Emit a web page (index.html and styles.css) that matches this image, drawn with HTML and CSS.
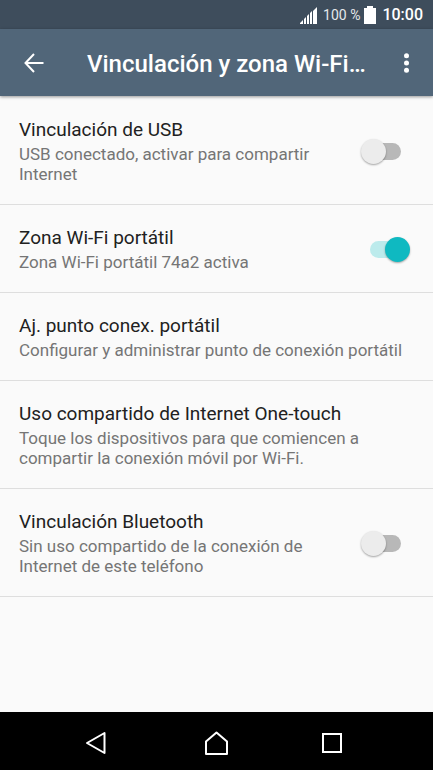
FILE: index.html
```
<!DOCTYPE html>
<html lang="es">
<head>
  <meta charset="UTF-8">
  <meta name="viewport" content="width=device-width, initial-scale=1.0">
  <title>Vinculación y zona Wi-Fi</title>
  <link rel="stylesheet" href="styles.css">
</head>
<body>
  <!-- Barra de estado -->
  <div class="status-bar">
    <svg class="signal" width="17" height="17" viewBox="0 0 17 17" aria-hidden="true">
      <path d="M0 17v-1l3-3v4zM4 17v-5l2-2v7zM7 17V9l2-2v10zM10 17V6l2-2v13zM13 17V4l4-4v17z" fill="#fff"/>
    </svg>
    <span class="battery-text">100 %</span>
    <svg class="battery" width="12" height="18" viewBox="0 0 12 18" aria-hidden="true">
      <path d="M3 0h6v2h3v16H0V2h3z" fill="#fff"/>
    </svg>
    <span class="clock">10:00</span>
  </div>

  <header class="app-bar">
    <button type="button" class="icon-btn back" aria-label="Atrás">
      <svg width="20" height="20" viewBox="0 0 20 20">
        <path d="M10 1L1.500 10L10 19M2 10H19.500" fill="none" stroke="#fff" stroke-width="2"/>
      </svg>
    </button>
    <h1>Vinculación y zona Wi-Fi…</h1>
    <button type="button" class="icon-btn more" aria-label="Más opciones">
      <svg width="6" height="20" viewBox="0 0 6 20" fill="#fff">
        <circle cx="2.500" cy="2.700" r="2.500"/>
        <circle cx="2.500" cy="10" r="2.500"/>
        <circle cx="2.500" cy="17.300" r="2.500"/>
      </svg>
    </button>
  </header>

  <!-- Lista de ajustes -->
  <main class="settings">
    <label class="row" for="usb">
      <span class="row-text">
        <span class="row-title">Vinculación de USB</span>
        <span class="row-summary">USB conectado, activar para compartir Internet</span>
      </span>
      <input type="checkbox" class="switch" id="usb">
    </label>
    <label class="row" for="wifi">
      <span class="row-text">
        <span class="row-title">Zona Wi-Fi portátil</span>
        <span class="row-summary">Zona Wi-Fi portátil 74a2 activa</span>
      </span>
      <input type="checkbox" class="switch" id="wifi" checked>
    </label>
    <a class="row" href="#">
      <span class="row-text">
        <span class="row-title">Aj. punto conex. portátil</span>
        <span class="row-summary">Configurar y administrar punto de conexión portátil</span>
      </span>
    </a>
    <a class="row" href="#">
      <span class="row-text">
        <span class="row-title">Uso compartido de Internet One-touch</span>
        <span class="row-summary">Toque los dispositivos para que comiencen a compartir la conexión móvil por Wi-Fi.</span>
      </span>
    </a>
    <label class="row" for="bluetooth">
      <span class="row-text">
        <span class="row-title">Vinculación Bluetooth</span>
        <span class="row-summary">Sin uso compartido de la conexión de Internet de este teléfono</span>
      </span>
      <input type="checkbox" class="switch" id="bluetooth">
    </label>
  </main>

  <!-- Barra de navegación -->
  <nav class="nav-bar">
    <button type="button" class="icon-btn" aria-label="Volver">
      <svg width="28" height="24" viewBox="0 0 28 24">
        <path d="M20.500 2V22L3 12z" fill="none" stroke="#fff" stroke-width="2" stroke-linejoin="round"/>
      </svg>
    </button>
    <button type="button" class="icon-btn" aria-label="Inicio">
      <svg width="25" height="24" viewBox="0 0 25 24">
        <path d="M2 23V10.500L12.500 1.500L23 10.500V23z" fill="none" stroke="#fff" stroke-width="2" stroke-linejoin="round"/>
      </svg>
    </button>
    <button type="button" class="icon-btn" aria-label="Recientes">
      <svg width="28" height="24" viewBox="0 0 28 24">
        <rect x="2" y="3" width="18" height="18" fill="none" stroke="#fff" stroke-width="2"/>
      </svg>
    </button>
  </nav>
</body>
</html>
```
FILE: styles.css
```
* {
  box-sizing: border-box;
}

body {
  margin: 0;
  min-height: 100vh;
  display: flex;
  flex-direction: column;
  background-color: #fafafa;
  font-family: Roboto, "Liberation Sans", sans-serif;
}

/* Barra de estado */
.status-bar {
  display: flex;
  align-items: center;
  justify-content: flex-end;
  height: 29px;
  padding-right: 10px;
  background-color: #3e4d5c;
  color: #fff;
}

.signal {
  margin-top: 2px;
}

.battery-text {
  margin: 0 4px 0 6px;
  font-size: 14px;
  color: #e4e8eb;
}

.clock {
  margin-left: 6px;
  font-size: 16px;
  font-weight: 500;
}

/* Cabecera */
.app-bar {
  display: flex;
  align-items: center;
  height: 67px;
  padding: 0 16px;
  background-color: #516679;
  color: #fff;
  box-shadow: 0 1px 3px rgba(0, 0, 0, 0.4);
}

.app-bar h1 {
  flex: 1;
  margin: 0 0 0 35px;
  padding-top: 2px;
  font-size: 24px;
  line-height: 32px;
  font-weight: 500;
  white-space: nowrap;
}

.icon-btn {
  display: flex;
  align-items: center;
  justify-content: center;
  width: 48px;
  height: 48px;
  padding: 0;
  border: none;
  background: none;
  cursor: pointer;
}

.back {
  width: 36px;
}

.more {
  width: 21px;
}

/* Lista */
.settings {
  flex: 1;
  padding-top: 1px;
}

.row {
  display: flex;
  align-items: center;
  padding: 21px 23px 20px 19px;
  border-bottom: 1px solid #dedede;
  color: #212121;
  text-decoration: none;
  cursor: pointer;
}

.row-text {
  flex: 1;
}

.row-title,
.row-summary {
  display: block;
}

.row-title {
  font-size: 19px;
  line-height: 24px;
}

.row-summary {
  margin-top: 2px;
  font-size: 17px;
  line-height: 20px;
  color: #757575;
}

/* Interruptor */
.switch {
  appearance: none;
  display: grid;
  align-items: center;
  width: 49px;
  height: 25px;
  margin: 0 0 0 24px;
  cursor: pointer;
}

.switch::before,
.switch::after {
  content: "";
  grid-area: 1 / 1;
}

.switch::before {
  justify-self: center;
  width: 31px;
  height: 17px;
  border-radius: 9px;
  background-color: #b8b8b8;
}

.switch::after {
  width: 25px;
  height: 25px;
  border-radius: 50%;
  background-color: #ececec;
  box-shadow: 0 1px 2px rgba(0, 0, 0, 0.35);
}

.switch:checked::before {
  background-color: #bcebec;
}

.switch:checked::after {
  justify-self: end;
  background-color: #0fb9c1;
}

/* Barra de navegación */
.nav-bar {
  display: flex;
  align-items: center;
  justify-content: space-between;
  height: 58px;
  padding: 3px 74px 0;
  background-color: #000;
}
```
